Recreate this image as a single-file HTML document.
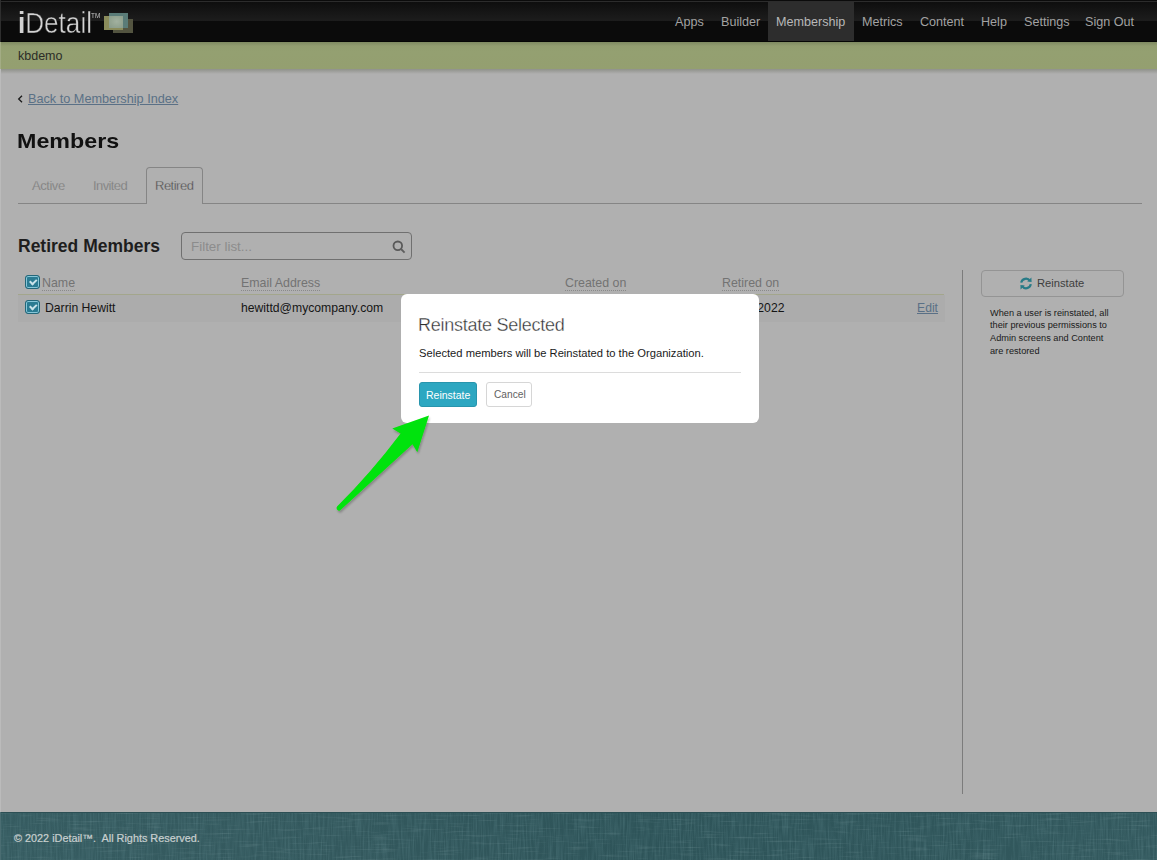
<!DOCTYPE html>
<html><head><meta charset="utf-8">
<style>
*{box-sizing:border-box;margin:0;padding:0}
html,body{width:1157px;height:860px;overflow:hidden;background:#b0b0b0;font-family:"Liberation Sans",sans-serif;position:relative}
.abs{position:absolute;white-space:nowrap}
#hdr{position:absolute;left:0;top:0;width:1157px;height:42px;background:#0b0b0b}
#hdr .top{position:absolute;left:0;top:1px;width:1157px;height:1px;background:#2c2c2c}
#hdr .gl{position:absolute;left:0;top:2px;width:1157px;height:19px;background:linear-gradient(#0e0e0e,#1d1d1d)}
#hdr .bot{position:absolute;left:0;top:41px;width:1157px;height:1px;background:#050505}
#nav .it{position:absolute;top:15px;font-size:12.6px;color:#a2a2a2;line-height:14px}
#nav .sel{position:absolute;left:768px;top:2px;width:86px;height:39px;background:#2d2d2d}
#green{position:absolute;left:0;top:42px;width:1157px;height:27px;background:linear-gradient(#7e8961 0px,#929d70 4px,#94a071 10px,#949f70 100%)}
#shadow{position:absolute;left:0;top:69px;width:1157px;height:5px;background:linear-gradient(#8f918a,#b0b0b0)}
#footer{position:absolute;left:0;top:812px;width:1157px;height:48px;background:linear-gradient(90deg,#365c61 0%,#33585d 30%,#2e5459 55%,#30565b 80%,#33595e 100%);border-top:1px solid #2c4f54;overflow:hidden}
.cb{position:absolute;width:15px;height:14px;border:1.5px solid #23677a;border-radius:3px;background:#2a7b92;box-shadow:inset 0 0 0 1px #86c6d8}
.cb:after{content:"";position:absolute;left:3.5px;top:1.5px;width:5px;height:3px;border-left:2px solid #c9e3ea;border-bottom:2px solid #c9e3ea;transform:rotate(-45deg);transform-origin:0 0;top:6px;left:3px}
.th{position:absolute;top:276px;font-size:12.4px;line-height:14px;color:#737373;white-space:nowrap;border-bottom:1px dotted #8a8a8a;padding-bottom:0px}
.td{position:absolute;top:301px;font-size:12.2px;line-height:15px;color:#151515;white-space:nowrap}
</style></head><body>
<div id="hdr"><div class="top"></div><div class="gl"></div><div class="bot"></div></div>
<div id="nav">
  <div class="sel"></div>
  <div class="it" style="left:675px">Apps</div>
  <div class="it" style="left:721px">Builder</div>
  <div class="it" style="left:776px;color:#b8b8b8">Membership</div>
  <div class="it" style="left:862px">Metrics</div>
  <div class="it" style="left:920px">Content</div>
  <div class="it" style="left:981px">Help</div>
  <div class="it" style="left:1024px">Settings</div>
  <div class="it" style="left:1085px">Sign Out</div>
</div>
<div class="abs" id="logo" style="left:18px;top:6px;font-size:29px;line-height:34px;color:#d2d2d2;transform-origin:0 0;transform:scaleX(0.9);-webkit-text-stroke:0.45px #111"><span style="font-weight:700;-webkit-text-stroke:0">i</span>Detail</div>
<div class="abs" style="left:91px;top:12px;font-size:7.5px;line-height:8px;color:#c4c4c4;transform-origin:0 0;transform:scaleX(0.85)">TM</div>
<div style="position:absolute;left:0;top:0;width:140px;height:40px;filter:blur(0.7px)">
<div class="abs" style="left:113px;top:19px;width:20px;height:14px;background:#535440"></div>
<div class="abs" style="left:109px;top:13px;width:19px;height:14.5px;background:#5a7c78"></div>
<div class="abs" style="left:104px;top:16px;width:18.6px;height:14px;background:#8a8c5b"></div>
<div class="abs" style="left:109px;top:16px;width:13.6px;height:11.5px;background:radial-gradient(ellipse at 55% 45%,#a2b1a0 0,#94a592 50%,#86998a 100%)"></div>
</div>
<div id="green"></div>
<div id="shadow"></div>
<div class="abs" style="left:18px;top:49px;font-size:12.5px;color:#2b2d27;line-height:14px">kbdemo</div>

<!-- back link -->
<svg class="abs" style="left:17px;top:94px" width="8" height="10" viewBox="0 0 8 10"><path d="M5 1.8 L1.7 5 L5 8.2" stroke="#1a1a1a" stroke-width="1.3" fill="none"/></svg>
<div class="abs" style="left:28px;top:92px;font-size:12.7px;line-height:15px;color:#5a7086;text-decoration:underline;text-underline-offset:1px">Back to Membership Index</div>
<div class="abs" style="left:17px;top:129px;font-size:20.6px;line-height:24px;font-weight:700;color:#111;transform-origin:0 0;transform:scaleX(1.13)">Members</div>
<!-- tabs -->
<div class="abs" style="left:18px;top:203px;width:1124px;height:1px;background:#858585"></div>
<div class="abs" style="left:146px;top:167px;width:57px;height:37px;border:1px solid #858585;border-bottom:none;border-radius:4px 4px 0 0;background:#b0b0b0"></div>
<div class="abs" style="left:32px;top:178px;font-size:13px;line-height:15px;color:#7a7a7a;letter-spacing:-0.45px;-webkit-text-stroke:0.25px #b0b0b0">Active</div>
<div class="abs" style="left:93px;top:178px;font-size:13px;line-height:15px;color:#7a7a7a;letter-spacing:-0.6px;-webkit-text-stroke:0.25px #b0b0b0">Invited</div>
<div class="abs" style="left:155px;top:178px;font-size:13px;line-height:15px;color:#4a4a4a;letter-spacing:-0.5px;-webkit-text-stroke:0.3px #b0b0b0">Retired</div>
<!-- retired members -->
<div class="abs" style="left:18px;top:236px;font-size:17.5px;line-height:21px;font-weight:700;color:#1e1e1e">Retired Members</div>
<div class="abs" style="left:181px;top:232px;width:231px;height:28px;border:1px solid #707070;border-radius:4px;background:#b0b0b0"></div>
<div class="abs" style="left:191px;top:239px;font-size:13.4px;line-height:15px;color:#8c8c8c">Filter list...</div>
<svg class="abs" style="left:392px;top:240px" width="14" height="14" viewBox="0 0 14 14"><circle cx="5.8" cy="5.8" r="4.3" stroke="#595959" stroke-width="1.8" fill="none"/><path d="M9 9 L12.6 12.6" stroke="#5e5e5e" stroke-width="1.8"/></svg>

<!-- table -->
<div class="cb" style="left:25px;top:275px"></div>
<div class="th" style="left:42px">Name</div>
<div class="th" style="left:241px">Email Address</div>
<div class="th" style="left:565px">Created on</div>
<div class="th" style="left:722px">Retired on</div>
<div class="abs" style="left:18px;top:294px;width:926px;height:1px;background:#a3a68c"></div>
<div class="abs" style="left:18px;top:295px;width:927px;height:27px;background:#acacac"></div>
<div class="cb" style="left:25px;top:300px"></div>
<div class="td" style="left:45px">Darrin Hewitt</div>
<div class="td" style="left:241px">hewittd@mycompany.com</div>
<div class="td" style="left:737px">22, 2022</div>
<div class="td" style="left:917px;color:#5a7086;text-decoration:underline;text-underline-offset:1px">Edit</div>
<div class="abs" style="left:962px;top:270px;width:1px;height:524px;background:#7c7c7c"></div>
<!-- sidebar -->
<div class="abs" style="left:981px;top:270px;width:143px;height:27px;border:1px solid #949494;border-radius:4px"></div>
<svg class="abs" style="left:1019px;top:277px" width="14" height="13" viewBox="0 0 14 13"><path d="M2.2 5.6 A4.8 4.8 0 0 1 11 4" stroke="#287b87" stroke-width="2.2" fill="none"/><path d="M8.2 4.6 L12.6 4.9 L12.4 0.6 Z" fill="#287b87"/><path d="M11.8 7.2 A4.8 4.8 0 0 1 3 9" stroke="#287b87" stroke-width="2.2" fill="none"/><path d="M5.8 8.4 L1.4 8.1 L1.6 12.4 Z" fill="#287b87"/></svg>
<div class="abs" style="left:1037px;top:277px;font-size:11.2px;line-height:13px;color:#3e3e3e">Reinstate</div>
<div class="abs" style="left:990px;top:306.5px;font-size:9.2px;line-height:12.95px;color:#1a1a1a">When a user is reinstated, all<br>their previous permissions to<br>Admin screens and Content<br>are restored</div>

<!-- modal -->
<div class="abs" style="left:401px;top:294px;width:358px;height:129px;background:#fff;border-radius:6px"></div>
<div class="abs" style="left:418px;top:315px;font-size:18px;line-height:21px;color:#2e2e2e;letter-spacing:-0.25px;-webkit-text-stroke:0.35px #fff">Reinstate Selected</div>
<div class="abs" style="left:419px;top:347px;font-size:11.2px;line-height:13px;color:#1a1a1a">Selected members will be Reinstated to the Organization.</div>
<div class="abs" style="left:419px;top:372px;width:322px;height:1px;background:#dcdcdc"></div>
<div class="abs" style="left:419px;top:382px;width:58px;height:25px;background:#2da7c1;border:1px solid #2895ad;border-radius:3px"></div>
<div class="abs" style="left:426px;top:389px;font-size:10.5px;line-height:12px;color:#fff">Reinstate</div>
<div class="abs" style="left:486px;top:382px;width:46px;height:25px;background:#fff;border:1px solid #d6d6d6;border-radius:3px"></div>
<div class="abs" style="left:494px;top:389px;font-size:10.2px;line-height:12px;color:#626262">Cancel</div>
<!-- arrow -->
<svg class="abs" style="left:0;top:0" width="1157" height="860" viewBox="0 0 1157 860">
<defs><filter id="sh" x="-20%" y="-20%" width="140%" height="140%"><feGaussianBlur in="SourceAlpha" stdDeviation="1.2"/><feOffset dx="0.5" dy="1.5"/><feComponentTransfer><feFuncA type="linear" slope="0.25"/></feComponentTransfer><feMerge><feMergeNode/><feMergeNode in="SourceGraphic"/></feMerge></filter></defs>
<path filter="url(#sh)" d="M429 415.5 L417.3 452.3 L412.5 444.3 L340.8 509.8 A2.4 2.4 0 0 1 337.3 506.3 Q371.3 472.3 400.6 433.4 L392.3 428.6 Z" fill="#04e308"/>
</svg>

<div id="footer"><svg width="1157" height="48" style="position:absolute;left:0;top:0"><filter id="nz" x="0" y="0" width="100%" height="100%"><feTurbulence type="fractalNoise" baseFrequency="0.6 0.04" numOctaves="2" seed="3"/><feColorMatrix type="matrix" values="0 0 0 0 0.1  0 0 0 0 0.22  0 0 0 0 0.24  0 0 0 -1.6 1.05"/></filter><filter id="nz2" x="0" y="0" width="100%" height="100%"><feTurbulence type="fractalNoise" baseFrequency="0.03 0.5" numOctaves="2" seed="7"/><feColorMatrix type="matrix" values="0 0 0 0 0.42  0 0 0 0 0.58  0 0 0 0 0.6  0 0 0 -2.2 1.0"/></filter><rect width="1157" height="48" filter="url(#nz)" opacity="0.45"/><rect width="1157" height="48" filter="url(#nz2)" opacity="0.2"/></svg></div>
<div class="abs" style="left:14px;top:832px;font-size:10.85px;line-height:13px;color:#c9d0d0;-webkit-text-stroke:0.2px #c9d0d0">© 2022 iDetail™.&nbsp; All Rights Reserved.</div>
<div class="abs" style="left:0;top:0;width:1px;height:42px;background:#2e2e2e"></div>
<div class="abs" style="left:0;top:42px;width:1px;height:27px;background:#a3ac84"></div>
<div class="abs" style="left:0;top:69px;width:1px;height:743px;background:#bbbbbb"></div>
<div class="abs" style="left:0;top:812px;width:1px;height:48px;background:#4a6d72"></div>
</body></html>
